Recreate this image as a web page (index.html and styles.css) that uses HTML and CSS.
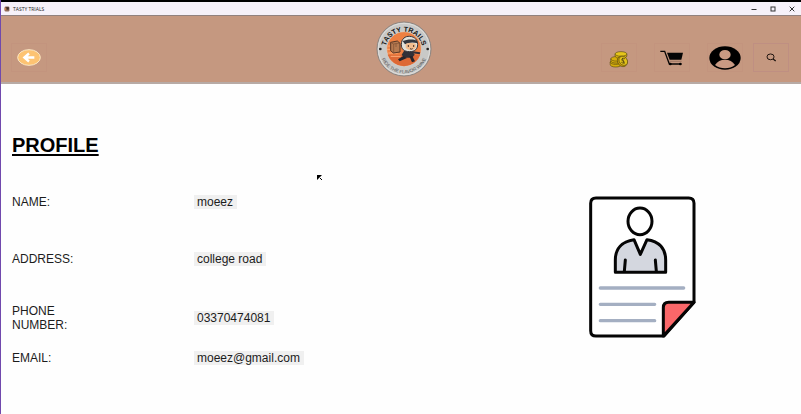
FILE: index.html
```html
<!DOCTYPE html>
<html lang="en">
<head>
<meta charset="utf-8">
<meta name="viewport" content="width=device-width, initial-scale=1">
<title>TASTY TRIALS</title>
<link rel="stylesheet" href="styles.css">
</head>
<body>
<div class="window">
  <div class="titlebar">
    <svg class="app-icon" viewBox="0 0 10 10" aria-hidden="true"><rect x="1" y="1" width="8" height="8" rx="2" fill="#8c6a58"/><rect x="3" y="2" width="5" height="4" fill="#3c2b29"/><path d="M1 3h3v4H1z" fill="#c58051"/></svg>
    <span class="app-title">TASTY TRIALS</span>
    <div class="window-controls">
      <button type="button" aria-label="Minimize"><svg viewBox="0 0 6 6"><path d="M0.5 3.5h5"/></svg></button>
      <button type="button" aria-label="Maximize"><svg viewBox="0 0 6 6"><rect x="1" y="1" width="4" height="4"/></svg></button>
      <button type="button" aria-label="Close"><svg viewBox="0 0 6 6"><path d="M.7.7l4.6 4.6M5.3.7L.7 5.3"/></svg></button>
    </div>
  </div>

  <header class="header">
    <button class="tool" type="button" aria-label="Back">
      <svg class="back-icon" viewBox="0 0 72 50"><ellipse cx="36" cy="25" rx="34" ry="23.5" fill="#fdc372" stroke="#fbe7c4" stroke-width="3"/><path d="M52 25H23M36 13L22 25l14 12" fill="none" stroke="#fff" stroke-width="7"/></svg>
    </button>
    <svg class="logo" viewBox="0 0 168 168" role="img" aria-label="Tasty Trails">
      <defs>
        <path id="arc-top" d="M28 88a56 56 0 0 1 112 0"/>
        <path id="arc-bottom" d="M11 84a73 73 0 0 0 146 0"/>
      </defs>
      <circle cx="84" cy="84" r="81" fill="#c9c9c7" stroke="#8d8580" stroke-width="3"/>
      <circle cx="84" cy="84" r="77" fill="none" stroke="#dededc" stroke-width="3"/>
      <circle cx="84" cy="84" r="52" fill="#ee8042" stroke="#dad3cc" stroke-width="2"/>
      <path d="M35 101h98a52 52 0 0 1-98 0" fill="#dd6936"/>
      <path d="M34 75h30M33 85h30M37 96h28M44 106h30" stroke="#ffad76" stroke-width="3"/>
      <path d="M44 64l20-4 8 7v26l-20 3-8-7z" fill="#b67a50" stroke="#573625" stroke-width="3"/>
      <path d="M44 64l8 5 20-3M53 69v27M60 68v10" fill="none" stroke="#7d4f34" stroke-width="2"/>
      <path d="M84 90l24-1 8 12-8 9H85l-8-9z" fill="#303038"/>
      <path d="M82 105l-16 10 5 6 22-10zM100 106l8 18 9-3-8-16z" fill="#25252c"/>
      <path d="M110 94l22 3" stroke="#343038" stroke-width="6"/>
      <path d="M76 71c0-18 12-26 25-25 16 1 24 12 24 24 0 14-8 22-24 22-17 0-25-8-25-21z" fill="#e2e0d9" stroke="#333239" stroke-width="3"/>
      <path d="M80 60c12-5 31-7 43-1l2 8c-14-5-29-3-38 3z" fill="#33363f"/>
      <path d="M89 69c8-4 22-4 30 0v11c-6 9-24 9-30 0z" fill="#f2bc8e"/>
      <path d="M97 72v6M113 72v6M102 83q4 3 8 0" stroke="#44302b" stroke-width="3" fill="none"/>
      <circle cx="13" cy="84" r="4" fill="#222"/><circle cx="155" cy="84" r="4" fill="#222"/>
      <text class="logo-name"><textPath href="#arc-top" startOffset="50%">TASTY TRAILS</textPath></text>
      <text class="logo-tagline"><textPath href="#arc-bottom" startOffset="50%">RIDE THE FLAVOR WAVE</textPath></text>
    </svg>
    <nav class="actions" aria-label="Main">
      <div class="shortcuts">
        <button class="tool" type="button" aria-label="Coins">
          <svg class="coins-icon" viewBox="0 0 60 52"><g fill="#d6ad0b" stroke="#5c4d12" stroke-width="2"><path d="M3 34v7c0 5 7 8 17 8s17-3 17-8v-7z"/><ellipse cx="20" cy="34" rx="17" ry="7"/><path d="M5 24v6c0 4 7 7 17 7s17-3 17-7v-6z"/><ellipse cx="22" cy="24" rx="17" ry="7"/><path d="M18 9v6c0 5 8 8 18 8s18-3 18-8V9z"/><ellipse cx="36" cy="9" rx="18" ry="7" fill="#e5c51a"/><ellipse cx="40" cy="32" rx="14" ry="17" transform="rotate(-38 40 32)" fill="#c89d08"/><ellipse cx="43" cy="30" rx="12" ry="15" transform="rotate(-38 43 30)" fill="#e2c21a"/><path d="M48 24c-5-4-11-1-9 4 1 4 8 2 7 7-2 3-6 2-9-1M40 21l6 18" fill="none" stroke-width="3"/></g></svg>
        </button>
        <button class="tool" type="button" aria-label="Cart">
          <svg class="cart-icon" viewBox="0 0 72 48"><path d="M1 4h13l14 38h36" fill="none" stroke="#080604" stroke-width="4"/><path d="M21 8h48l-5 21H29z" fill="#050505"/><path d="M28 34h37" stroke="#8c6957" stroke-width="2"/><circle cx="31" cy="42" r="4"/><circle cx="61" cy="42" r="4"/></svg>
        </button>
        <button class="tool" type="button" aria-label="Profile">
          <svg class="user-icon" viewBox="0 0 96 72"><ellipse cx="48" cy="36" rx="47" ry="35.5"/><ellipse cx="48" cy="26" rx="17" ry="14" fill="#c99a83"/><path d="M18 57c7-11 17-16 30-16s23 5 30 16c-17 13-43 13-60 0z" fill="#c99a83"/></svg>
        </button>
      </div>
      <button class="tool search" type="button" aria-label="Search">
        <svg class="search-icon" viewBox="0 0 34 28"><ellipse cx="14" cy="12" rx="11" ry="9" fill="none" stroke="#1b110d" stroke-width="3"/><path d="M22 19l8 6" stroke="#1b110d" stroke-width="4"/></svg>
      </button>
    </nav>
  </header>

  <main class="content">
    <section class="profile">
      <h1>PROFILE</h1>
      <dl class="details">
        <dt>NAME:</dt><dd><span>moeez</span></dd>
        <dt>ADDRESS:</dt><dd><span>college road</span></dd>
        <dt>PHONE NUMBER:</dt><dd><span>03370474081</span></dd>
        <dt>EMAIL:</dt><dd><span>moeez@gmail.com</span></dd>
      </dl>
    </section>
    <svg class="document" viewBox="24 15 324 432" role="img" aria-label="Profile document">
      <path d="M48 24h278q16 0 16 16v297l-90 101H48q-16 0-16-16V40q0-16 16-16z" fill="#fff" stroke="#050505" stroke-width="9" stroke-linejoin="round"/>
      <path d="M342 337h-76q-16 0-16 16v85z" fill="#fa6769" stroke="#050505" stroke-width="9" stroke-linejoin="round"/>
      <ellipse cx="180" cy="94" rx="36" ry="40" fill="#fff" stroke="#050505" stroke-width="9"/>
      <path d="M106 247v-37c0-34 20-56 56-61l19 44 20-44c36 4 56 27 56 61v37z" fill="#d4d7df" stroke="#050505" stroke-width="9" stroke-linejoin="round"/>
      <path d="M136 210l-3 34M226 210l3 34" stroke="#050505" stroke-width="9" stroke-linecap="round"/>
      <path d="M61 294h250M61 343h163M61 392h163" stroke="#a4afc2" stroke-width="10" stroke-linecap="round"/>
    </svg>
  </main>
  <svg class="pointer" viewBox="0 0 6 6" aria-hidden="true"><path d="M0 0h5L0 5zM3 3h1v1H3zM4 4h1v1H4z"/></svg>
</div>
</body>
</html>
```
FILE: styles.css
```css
* {
  box-sizing: border-box;
}

body {
  margin: 0;
  background: #fefefe;
  color: #1c1c1c;
  font-family: "Liberation Sans", Arial, sans-serif;
  font-size: 12px;
  line-height: 14px;
}

button {
  padding: 0;
  border: 0;
  background: none;
}

svg {
  display: block;
}

.window {
  position: relative;
  min-height: 100vh;
  border-left: 1px solid #7049ad;
}

.titlebar {
  display: flex;
  align-items: center;
  height: 16px;
  padding: 0 6px 0 3px;
  border-top: 2px solid #000;
  border-bottom: 1px solid #92827f;
  background: #f6f1f9;
}

.app-icon {
  width: 6px;
  height: 6px;
}

.app-title {
  margin-left: 3px;
  color: #222;
  font-family: "Open Sans", sans-serif;
  font-size: 5px;
  line-height: 8px;
}

.window-controls {
  display: flex;
  gap: 13px;
  margin-left: auto;
}

.window-controls svg {
  width: 6px;
  height: 6px;
  fill: none;
  stroke: #333;
  stroke-width: 1;
}

.header {
  display: grid;
  grid-template-columns: 101fr auto 99fr;
  align-items: center;
  height: 68px;
  padding: 0 12px 0 10px;
  border-bottom: 2px solid #b7aaa5;
  background: #c59880;
}

.tool {
  display: flex;
  align-items: center;
  justify-content: center;
  width: 36px;
  height: 29px;
  border: 1px solid #c3947e;
}

.header .tool {
  margin-top: 17px;
}

.header .search {
  border-color: #bf8f82;
}

.back-icon {
  flex: none;
  width: 24px;
  height: 17px;
}

.logo {
  width: 56px;
  height: 56px;
}

.logo-name {
  font-size: 21px;
  font-weight: bold;
  text-anchor: middle;
  fill: #151515;
}

.logo-tagline {
  font-size: 14px;
  text-anchor: middle;
  fill: #555;
}

.actions {
  display: flex;
  justify-content: flex-end;
  gap: 10px;
}

.shortcuts {
  display: flex;
  gap: 17px;
}

.coins-icon {
  width: 20px;
  height: 17px;
  margin-top: 4px;
}

.cart-icon {
  flex: none;
  width: 24px;
  height: 16px;
}

.user-icon {
  flex: none;
  width: 32px;
  height: 24px;
}

.search-icon {
  width: 11px;
  height: 9px;
}

.content {
  display: flex;
  justify-content: space-between;
  align-items: flex-start;
  padding: 50px 105px 0 11px;
}

h1 {
  margin: 0 0 38px;
  color: #000;
  font-size: 20px;
  line-height: 23px;
  text-decoration: underline;
  text-decoration-thickness: 2px;
  text-underline-offset: 2px;
}

.details {
  display: grid;
  grid-template-columns: 80px auto;
  grid-template-rows: 57px 33px 66px 14px;
  column-gap: 102px;
  margin: 0;
}

.details dd {
  margin: 0;
}

.details dt:nth-of-type(3),
.details dd:nth-of-type(3) {
  align-self: center;
}

.details span {
  display: inline-block;
  padding: 0 4px 0 3px;
  background: #f0f0f0;
}

.document {
  flex: none;
  width: 108px;
  height: 144px;
  margin-top: 61px;
}

.pointer {
  position: absolute;
  top: 175px;
  left: 316px;
  width: 6px;
  height: 6px;
}
```
